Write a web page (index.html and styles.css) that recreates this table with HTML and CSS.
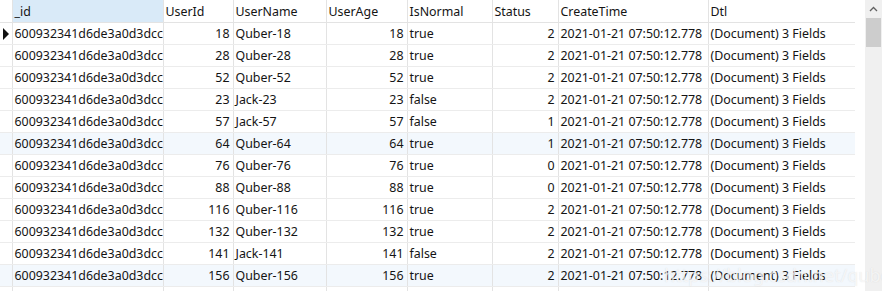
FILE: index.html
```html
<!DOCTYPE html>
<html lang="en">
<head>
  <meta charset="UTF-8">
  <title>Collection view</title>
  <link rel="stylesheet" href="styles.css">
</head>
<body>
  <div class="grid-view">
    <div class="grid-body">
      <table class="data">
        <colgroup>
          <col class="c-mark"><col class="c-id"><col class="c-uid"><col class="c-name"><col class="c-age">
          <col class="c-normal"><col class="c-status"><col class="c-time"><col class="c-dtl">
        </colgroup>
        <thead>
          <tr>
            <th></th>
            <th class="sel">_id</th>
            <th>UserId</th>
            <th>UserName</th>
            <th>UserAge</th>
            <th>IsNormal</th>
            <th>Status</th>
            <th>CreateTime</th>
            <th>Dtl</th>
          </tr>
        </thead>
        <tbody>
          <tr><td class="mark"><span class="arrow"></span></td><td>600932341d6de3a0d3dcc</td><td class="num">18</td><td>Quber-18</td><td class="num">18</td><td>true</td><td class="num">2</td><td>2021-01-21 07:50:12.778</td><td>(Document) 3 Fields</td></tr>
          <tr><td class="mark"></td><td>600932341d6de3a0d3dcc</td><td class="num">28</td><td>Quber-28</td><td class="num">28</td><td>true</td><td class="num">2</td><td>2021-01-21 07:50:12.778</td><td>(Document) 3 Fields</td></tr>
          <tr><td class="mark"></td><td>600932341d6de3a0d3dcc</td><td class="num">52</td><td>Quber-52</td><td class="num">52</td><td>true</td><td class="num">2</td><td>2021-01-21 07:50:12.778</td><td>(Document) 3 Fields</td></tr>
          <tr><td class="mark"></td><td>600932341d6de3a0d3dcc</td><td class="num">23</td><td>Jack-23</td><td class="num">23</td><td>false</td><td class="num">2</td><td>2021-01-21 07:50:12.778</td><td>(Document) 3 Fields</td></tr>
          <tr><td class="mark"></td><td>600932341d6de3a0d3dcc</td><td class="num">57</td><td>Jack-57</td><td class="num">57</td><td>false</td><td class="num">1</td><td>2021-01-21 07:50:12.778</td><td>(Document) 3 Fields</td></tr>
          <tr class="alt"><td class="mark"></td><td>600932341d6de3a0d3dcc</td><td class="num">64</td><td>Quber-64</td><td class="num">64</td><td>true</td><td class="num">1</td><td>2021-01-21 07:50:12.778</td><td>(Document) 3 Fields</td></tr>
          <tr><td class="mark"></td><td>600932341d6de3a0d3dcc</td><td class="num">76</td><td>Quber-76</td><td class="num">76</td><td>true</td><td class="num">0</td><td>2021-01-21 07:50:12.778</td><td>(Document) 3 Fields</td></tr>
          <tr><td class="mark"></td><td>600932341d6de3a0d3dcc</td><td class="num">88</td><td>Quber-88</td><td class="num">88</td><td>true</td><td class="num">0</td><td>2021-01-21 07:50:12.778</td><td>(Document) 3 Fields</td></tr>
          <tr><td class="mark"></td><td>600932341d6de3a0d3dcc</td><td class="num">116</td><td>Quber-116</td><td class="num">116</td><td>true</td><td class="num">2</td><td>2021-01-21 07:50:12.778</td><td>(Document) 3 Fields</td></tr>
          <tr><td class="mark"></td><td>600932341d6de3a0d3dcc</td><td class="num">132</td><td>Quber-132</td><td class="num">132</td><td>true</td><td class="num">2</td><td>2021-01-21 07:50:12.778</td><td>(Document) 3 Fields</td></tr>
          <tr><td class="mark"></td><td>600932341d6de3a0d3dcc</td><td class="num">141</td><td>Jack-141</td><td class="num">141</td><td>false</td><td class="num">2</td><td>2021-01-21 07:50:12.778</td><td>(Document) 3 Fields</td></tr>
          <tr class="alt"><td class="mark"></td><td>600932341d6de3a0d3dcc</td><td class="num">156</td><td>Quber-156</td><td class="num">156</td><td>true</td><td class="num">2</td><td>2021-01-21 07:50:12.778</td><td>(Document) 3 Fields</td></tr>
          <tr><td class="mark"></td><td></td><td></td><td></td><td></td><td></td><td></td><td></td><td></td></tr>
        </tbody>
      </table>
    </div>
    <div class="scrollbar">
      <div class="sb-up">
        <svg width="9" height="6" viewBox="0 0 9 6"><path d="M1 5 L4.5 1.5 L8 5" fill="none" stroke="#606060" stroke-width="1.3"/></svg>
      </div>
      <div class="sb-thumb"></div>
    </div>
    <div class="watermark">https://blog.csdn.net/qubernet</div>
  </div>
</body>
</html>
```

FILE: styles.css
```css
body {
  margin: 0;
  background: #fff;
  font-family: "Noto Sans", "Noto Sans CJK SC", sans-serif;
  font-size: 12.4px;
  color: #141414;
  overflow: hidden;
}

.grid-view {
  position: relative;
  display: flex;
  width: 882px;
  height: 291px;
  overflow: hidden;
}

.grid-body {
  flex: 1;
  overflow: hidden;
}

.data {
  border-collapse: collapse;
  table-layout: fixed;
  width: 855px;
}

.c-mark { width: 12px; }
.c-id { width: 151px; }
.c-uid { width: 70px; }
.c-name { width: 93px; }
.c-age { width: 81px; }
.c-normal { width: 85px; }
.c-status { width: 66px; }
.c-time { width: 150px; }
.c-dtl { width: 147px; }

.data th,
.data td {
  height: 21px;
  padding: 0 3px 0 2px;
  border-right: 1px solid #e3e3e3;
  border-bottom: 1px solid #ececec;
  white-space: nowrap;
  overflow: hidden;
  text-overflow: clip;
  text-align: left;
  font-weight: normal;
  line-height: 21px;
}

.data th {
  height: 20px;
  padding-top: 2px;
  line-height: 20px;
  border-bottom-color: #e3e3e3;
}

.data th.sel {
  background: #d9eaf8;
}

.data td.num {
  text-align: right;
}

.data tr.alt td {
  background: #f3f8fd;
}

.data td.mark {
  padding: 0;
}

.arrow {
  display: block;
  width: 0;
  height: 0;
  margin-left: 3px;
  border-top: 6px solid transparent;
  border-bottom: 6px solid transparent;
  border-left: 6px solid #111;
}

.watermark {
  position: absolute;
  left: 664px;
  top: 265px;
  font-size: 18px;
  line-height: 20px;
  color: rgba(255, 255, 255, 0.7);
  text-shadow: 0 0 1px rgba(160, 160, 160, 0.3);
  pointer-events: none;
}

.scrollbar {
  width: 17px;
  margin-left: 10px;
  background: #f0f0f0;
  display: flex;
  flex-direction: column;
  align-items: center;
}

.sb-up {
  height: 17px;
  display: flex;
  align-items: center;
  justify-content: center;
}

.sb-thumb {
  width: 15px;
  height: 29px;
  margin-top: 1px;
  background: #cdcdcd;
}
```
